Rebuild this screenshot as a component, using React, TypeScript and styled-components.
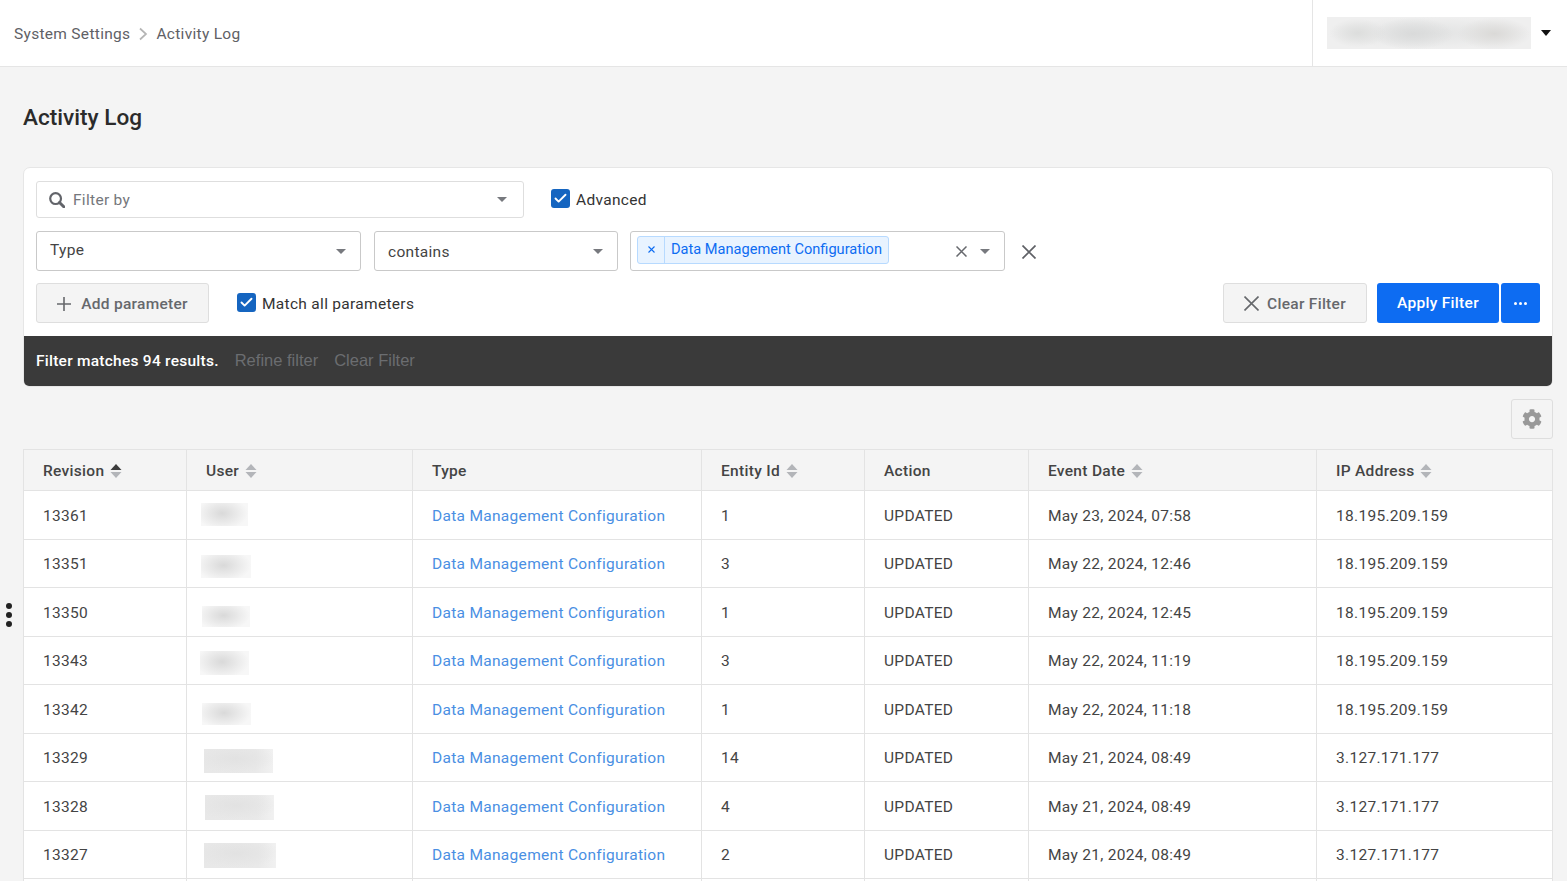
import React from 'react';
import styled, { createGlobalStyle } from 'styled-components';
import { Check } from 'lucide-react';
import { FaCog } from 'react-icons/fa';

const GlobalStyle = createGlobalStyle`
  html, body {
    margin: 0;
    height: 881px;
    overflow: hidden;
    background: #f4f4f4;
    font-family: Roboto, "Liberation Sans", sans-serif;
    font-size: 15.5px;
    letter-spacing: 0.3px;
    color: #444;
  }
  * { box-sizing: border-box; }
`;

const TopBar = styled.header`
  height: 67px;
  display: flex;
  align-items: stretch;
  justify-content: space-between;
  background: #fff;
  border-bottom: 1px solid #e5e5e5;
`;

const Breadcrumbs = styled.nav`
  display: flex;
  align-items: center;
  padding: 1px 0 0 14px;
  gap: 8px;
  color: #5f6166;
`;

const UserArea = styled.div`
  width: 255px;
  display: flex;
  align-items: center;
  padding-left: 14px;
  border-left: 1px solid #e5e5e5;
`;

const UserBlur = styled.div`
  width: 204px;
  height: 32px;
  background:
    radial-gradient(ellipse 14% 45% at 15% 50%, #dcdddc, transparent),
    radial-gradient(ellipse 20% 50% at 42% 52%, #d9dada, transparent),
    radial-gradient(ellipse 18% 50% at 82% 52%, #dad9d7, transparent),
    radial-gradient(ellipse 50% 50% at 50% 50%, #e2e3e3, #efefef);
`;

const CaretDark = styled.span`
  margin-left: 10px;
  width: 0;
  height: 0;
  border-left: 5.5px solid transparent;
  border-right: 5.5px solid transparent;
  border-top: 6px solid #111;
`;

const Content = styled.main`
  padding: 0 14px 0 23px;
`;

const Title = styled.h1`
  margin: 0;
  padding-top: 36px;
  height: 100px;
  font-size: 22.6px;
  line-height: 29px;
  font-weight: 500;
  letter-spacing: 0;
  color: #2b2b2b;
`;

const FilterCard = styled.section`
  background: #fff;
  border: 1px solid #e6e6e6;
  border-radius: 7px;
  display: flex;
  flex-direction: column;
`;

const FilterBody = styled.div`
  padding: 13px 12px;
  display: flex;
  flex-direction: column;
`;

const FilterRow = styled.div<{ $mb?: number }>`
  display: flex;
  align-items: center;
  margin-bottom: ${(p) => p.$mb ?? 0}px;
`;

const SelectBox = styled.div<{ $w: number; $h: number; $mr?: number; $pl?: number; $pr?: number; $light?: boolean }>`
  width: ${(p) => p.$w}px;
  height: ${(p) => p.$h}px;
  margin-right: ${(p) => p.$mr ?? 0}px;
  flex-shrink: 0;
  display: flex;
  align-items: center;
  border: 1px solid ${(p) => (p.$light ? '#dedede' : '#c9c9c9')};
  border-radius: 3px;
  background: #fff;
  padding: 0 ${(p) => p.$pr ?? 14}px 0 ${(p) => p.$pl ?? 13}px;
`;

const SelectValue = styled.span<{ $pt?: number; $pb?: number; $muted?: boolean }>`
  flex: 1;
  color: ${(p) => (p.$muted ? '#75777c' : '#444')};
  padding-top: ${(p) => p.$pt ?? 0}px;
  padding-bottom: ${(p) => p.$pb ?? 0}px;
`;

const Caret = styled.span`
  width: 0;
  height: 0;
  border-left: 5px solid transparent;
  border-right: 5px solid transparent;
  border-top: 5px solid #77797e;
`;

const SearchSvg = styled.svg`
  margin-right: 8px;
  flex-shrink: 0;
`;

const Tag = styled.div`
  height: 28px;
  margin-bottom: 3px;
  display: flex;
  align-items: stretch;
  border: 1px solid #b7daff;
  border-radius: 3px;
  background: #e8f3ff;
  color: #0d6cf2;
  font-size: 14.6px;
  letter-spacing: 0;
`;

const TagRemove = styled.span`
  width: 27px;
  display: flex;
  align-items: center;
  justify-content: center;
  border-right: 1px solid #b7daff;
`;

const TagLabel = styled.span`
  padding: 0 6px;
  line-height: 25px;
`;

const Spacer = styled.div`
  flex: 1;
`;

const Cross = styled.svg<{ $ml?: number; $mr?: number; $mt?: number }>`
  flex-shrink: 0;
  margin-left: ${(p) => p.$ml ?? 0}px;
  margin-right: ${(p) => p.$mr ?? 0}px;
  margin-top: ${(p) => p.$mt ?? 0}px;
`;

const CheckLabel = styled.label<{ $ml: number }>`
  margin-left: ${(p) => p.$ml}px;
  display: flex;
  align-items: center;
  gap: 6px;
  padding-top: 1px;
  color: #333;
`;

const CheckBox = styled.span`
  width: 19px;
  height: 19px;
  border-radius: 3px;
  background: #1565c0;
  color: #fff;
  display: flex;
  align-items: center;
  justify-content: center;
  margin-top: -3px;
`;

const GhostButton = styled.button<{ $w: number; $mr?: number; $gap: number }>`
  width: ${(p) => p.$w}px;
  height: 40px;
  margin-right: ${(p) => p.$mr ?? 0}px;
  display: flex;
  align-items: center;
  justify-content: center;
  gap: ${(p) => p.$gap}px;
  padding: 1px 0 0;
  border: 1px solid #dedede;
  border-radius: 3px;
  background: #f4f4f4;
  color: #66686c;
  font: 500 15.5px Roboto, "Liberation Sans", sans-serif;
  letter-spacing: 0.28px;
`;

const PrimaryButton = styled.button<{ $w: number; $mr?: number }>`
  width: ${(p) => p.$w}px;
  height: 40px;
  margin-right: ${(p) => p.$mr ?? 0}px;
  display: flex;
  align-items: center;
  justify-content: center;
  gap: 2px;
  padding: 0;
  border: none;
  border-radius: 3px;
  background: #0d6cf2;
  color: #fff;
  font: 500 15.5px Roboto, "Liberation Sans", sans-serif;
  letter-spacing: 0.3px;
`;

const Dot = styled.i`
  width: 3px;
  height: 3px;
  border-radius: 50%;
  background: #fff;
`;

const ResultBar = styled.div`
  height: 50px;
  display: flex;
  align-items: center;
  padding-left: 12px;
  gap: 16px;
  background: #3a3a3a;
  border-radius: 0 0 5px 5px;
  color: #fff;
  font-weight: 500;
  letter-spacing: 0.25px;
`;

const ResultAction = styled.span`
  color: #6b6d70;
  font-family: "Liberation Sans", Arial, sans-serif;
  font-weight: 400;
  font-size: 16.5px;
  letter-spacing: 0;
  padding-bottom: 1px;
`;

const ToolRow = styled.div`
  display: flex;
  justify-content: flex-end;
  padding: 12px 0 10px;
`;

const GearButton = styled.button`
  width: 42px;
  height: 40px;
  display: flex;
  align-items: center;
  justify-content: center;
  padding: 0;
  background: #f4f4f4;
  border: 1px solid #dedede;
  border-radius: 3px;
  color: #999;
`;

const TableWrap = styled.div`
  border: 1px solid #e3e3e3;
  border-bottom: none;
  background: #fff;
`;

const Row = styled.div<{ $head?: boolean }>`
  display: grid;
  grid-template-columns: 163px 226px 289px 163px 164px 288px 1fr;
  height: ${(p) => (p.$head ? '41px' : '48.5px')};
  background: ${(p) => (p.$head ? '#f4f4f4' : '#fff')};
  border-bottom: 1px solid #e3e3e3;
`;

const Cell = styled.div<{ $head?: boolean }>`
  display: flex;
  align-items: center;
  padding: ${(p) => (p.$head ? 1 : 2)}px 0 0 19px;
  border-right: 1px solid #e3e3e3;
  color: #444;
  font-weight: ${(p) => (p.$head ? 500 : 400)};
  gap: 6px;
  &:last-child {
    border-right: none;
  }
`;

const UserCell = styled(Cell)`
  padding: 0;
`;

const TypeLink = styled.a`
  color: #4a8fe3;
`;

const BlurBlock = styled.div<{ $x: number; $w: number; $h: number; $dy: number; $wide?: boolean }>`
  margin-left: ${(p) => p.$x}px;
  width: ${(p) => p.$w}px;
  height: ${(p) => p.$h}px;
  transform: translateY(${(p) => p.$dy}px);
  background: ${(p) =>
    p.$wide
      ? 'radial-gradient(ellipse 60% 60% at 45% 40%, #e2e2e2, transparent), linear-gradient(90deg, #e8e8e8 0%, #e9e9e9 75%, #f1f1f1 100%)'
      : 'radial-gradient(ellipse 55% 70% at 45% 45%, #d9d9d9 0%, #eeeeee 70%, #f7f7f7 100%)'};
`;

const KebabDots = styled.div`
  position: absolute;
  left: 6px;
  top: 603px;
  display: flex;
  flex-direction: column;
  gap: 3px;
`;

const KebabDot = styled.i`
  width: 6px;
  height: 6px;
  border-radius: 50%;
  background: #222;
`;

const SortSvg = ({ active }: { active?: boolean }) => (
  <svg width="12" height="16" viewBox="0 0 12 16">
    <path d="M6 1 L11.5 7 H0.5 Z" fill={active ? '#3c3c3c' : '#b3b5b9'} />
    <path d="M6 15 L11.5 9 H0.5 Z" fill="#b3b5b9" />
  </svg>
);

const ChevronSvg = () => (
  <svg width="10" height="14" viewBox="0 0 10 14" fill="none" stroke="#b5b5b5" strokeWidth="1.7">
    <path d="M2 1.5 L8 7 L2 12.5" />
  </svg>
);

const PlusSvg = () => (
  <svg width="14" height="14" viewBox="0 0 14 14" stroke="#66686c" strokeWidth="1.6">
    <path d="M7 0 V14 M0 7 H14" />
  </svg>
);

const CrossIcon = ({
  size,
  color,
  weight = 1.5,
  ml,
  mr,
  mt,
}: {
  size: number;
  color: string;
  weight?: number;
  ml?: number;
  mr?: number;
  mt?: number;
}) => (
  <Cross $ml={ml} $mr={mr} $mt={mt} width={size} height={size} viewBox={`0 0 ${size} ${size}`} stroke={color} strokeWidth={weight}>
    <path d={`M0.5 0.5 L${size - 0.5} ${size - 0.5} M${size - 0.5} 0.5 L0.5 ${size - 0.5}`} />
  </Cross>
);

const rows = [
  { rev: '13361', id: '1', date: 'May 23, 2024, 07:58', ip: '18.195.209.159', b: { x: 14, w: 47, h: 23, dy: 0 } },
  { rev: '13351', id: '3', date: 'May 22, 2024, 12:46', ip: '18.195.209.159', b: { x: 14, w: 50, h: 23, dy: 3 } },
  { rev: '13350', id: '1', date: 'May 22, 2024, 12:45', ip: '18.195.209.159', b: { x: 15, w: 48, h: 21, dy: 5 } },
  { rev: '13343', id: '3', date: 'May 22, 2024, 11:19', ip: '18.195.209.159', b: { x: 13, w: 49, h: 24, dy: 3 } },
  { rev: '13342', id: '1', date: 'May 22, 2024, 11:18', ip: '18.195.209.159', b: { x: 15, w: 49, h: 22, dy: 5 } },
  { rev: '13329', id: '14', date: 'May 21, 2024, 08:49', ip: '3.127.171.177', b: { x: 17, w: 69, h: 24, dy: 4 }, wide: true },
  { rev: '13328', id: '4', date: 'May 21, 2024, 08:49', ip: '3.127.171.177', b: { x: 18, w: 69, h: 25, dy: 2 }, wide: true },
  { rev: '13327', id: '2', date: 'May 21, 2024, 08:49', ip: '3.127.171.177', b: { x: 17, w: 72, h: 25, dy: 1 }, wide: true },
];

export default function App() {
  return (
    <>
      <GlobalStyle />
      <TopBar>
        <Breadcrumbs>
          <span>System Settings</span>
          <ChevronSvg />
          <span>Activity Log</span>
        </Breadcrumbs>
        <UserArea>
          <UserBlur />
          <CaretDark />
        </UserArea>
      </TopBar>
      <Content>
        <Title>Activity Log</Title>
        <FilterCard>
          <FilterBody>
            <FilterRow $mb={13}>
              <SelectBox $w={488} $h={37} $pl={12} $pr={16} $light>
                <SearchSvg width="16" height="16" viewBox="0 0 16 16" fill="none" stroke="#62646a">
                  <circle cx="6.6" cy="6.6" r="5.4" strokeWidth="2.2" />
                  <path d="M10.5 10.5 L14.8 14.8" strokeWidth="3" strokeLinecap="round" />
                </SearchSvg>
                <SelectValue $muted>Filter by</SelectValue>
                <Caret />
              </SelectBox>
              <CheckLabel $ml={27}>
                <CheckBox><Check size={15} strokeWidth={3} /></CheckBox>
                Advanced
              </CheckLabel>
            </FilterRow>
            <FilterRow $mb={12}>
              <SelectBox $w={325} $h={40} $mr={13}>
                <SelectValue $pb={2}>Type</SelectValue>
                <Caret />
              </SelectBox>
              <SelectBox $w={244} $h={40} $mr={12}>
                <SelectValue $pt={2}>contains</SelectValue>
                <Caret />
              </SelectBox>
              <SelectBox $w={375} $h={40} $pl={6}>
                <Tag>
                  <TagRemove><CrossIcon size={7} color="#0d6cf2" weight={1.1} /></TagRemove>
                  <TagLabel>Data Management Configuration</TagLabel>
                </Tag>
                <Spacer />
                <CrossIcon size={11} color="#66686d" mr={13} />
                <Caret />
              </SelectBox>
              <CrossIcon size={14} color="#5f6166" weight={1.7} ml={17} mt={1} />
            </FilterRow>
            <FilterRow>
              <GhostButton $w={173} $gap={10}>
                <PlusSvg />
                Add parameter
              </GhostButton>
              <CheckLabel $ml={28}>
                <CheckBox><Check size={15} strokeWidth={3} /></CheckBox>
                Match all parameters
              </CheckLabel>
              <Spacer />
              <GhostButton $w={144} $mr={10} $gap={8}>
                <CrossIcon size={15} color="#66686c" weight={1.6} />
                Clear Filter
              </GhostButton>
              <PrimaryButton $w={122} $mr={2}>Apply Filter</PrimaryButton>
              <PrimaryButton $w={39}>
                <Dot />
                <Dot />
                <Dot />
              </PrimaryButton>
            </FilterRow>
          </FilterBody>
          <ResultBar>
            <span>Filter matches 94 results.</span>
            <ResultAction>Refine filter</ResultAction>
            <ResultAction>Clear Filter</ResultAction>
          </ResultBar>
        </FilterCard>
        <ToolRow>
          <GearButton><FaCog size={20} /></GearButton>
        </ToolRow>
        <TableWrap>
          <Row $head>
            <Cell $head>Revision <SortSvg active /></Cell>
            <Cell $head>User <SortSvg /></Cell>
            <Cell $head>Type</Cell>
            <Cell $head>Entity Id <SortSvg /></Cell>
            <Cell $head>Action</Cell>
            <Cell $head>Event Date <SortSvg /></Cell>
            <Cell $head>IP Address <SortSvg /></Cell>
          </Row>
          {rows.map((r) => (
            <Row key={r.rev}>
              <Cell>{r.rev}</Cell>
              <UserCell>
                <BlurBlock $x={r.b.x} $w={r.b.w} $h={r.b.h} $dy={r.b.dy} $wide={r.wide} />
              </UserCell>
              <Cell><TypeLink>Data Management Configuration</TypeLink></Cell>
              <Cell>{r.id}</Cell>
              <Cell>UPDATED</Cell>
              <Cell>{r.date}</Cell>
              <Cell>{r.ip}</Cell>
            </Row>
          ))}
          <Row>
            <Cell />
            <Cell />
            <Cell />
            <Cell />
            <Cell />
            <Cell />
            <Cell />
          </Row>
        </TableWrap>
      </Content>
      <KebabDots>
        <KebabDot />
        <KebabDot />
        <KebabDot />
      </KebabDots>
    </>
  );
}
